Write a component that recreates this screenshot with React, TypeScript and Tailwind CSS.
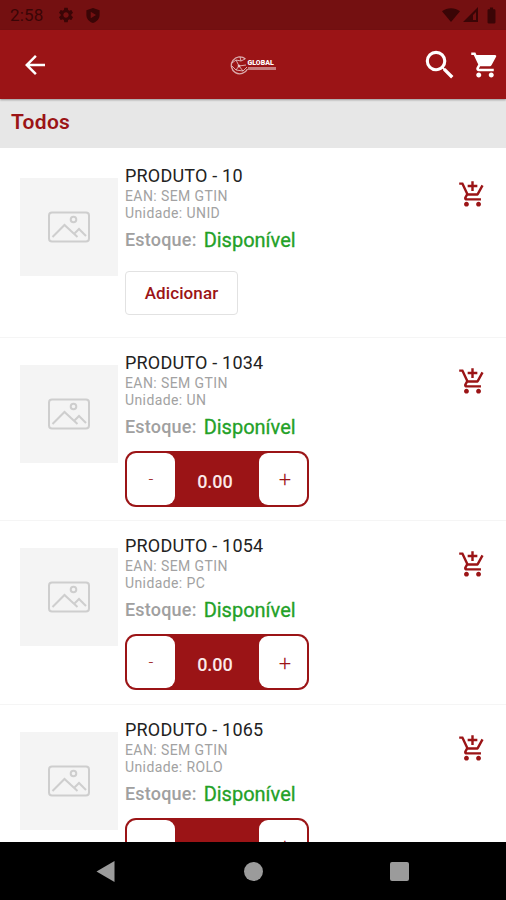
import { useState } from "react";
import {
  MdAddShoppingCart,
  MdArrowBack,
  MdBatteryFull,
  MdSearch,
  MdSettings,
  MdShoppingCart,
} from "react-icons/md";

type Product = {
  name: string;
  ean: string;
  unit: string;
  inCart: boolean;
};

const PRODUCTS: Product[] = [
  { name: "PRODUTO - 10", ean: "SEM GTIN", unit: "UNID", inCart: false },
  { name: "PRODUTO - 1034", ean: "SEM GTIN", unit: "UN", inCart: true },
  { name: "PRODUTO - 1054", ean: "SEM GTIN", unit: "PC", inCart: true },
  { name: "PRODUTO - 1065", ean: "SEM GTIN", unit: "ROLO", inCart: true },
];

function StatusBar() {
  return (
    <div className="flex h-[30px] flex-shrink-0 items-center justify-between bg-[#741011] pl-[10px] pr-[5px] text-[#3a0506]">
      <div className="flex items-center">
        <span className="w-[47px] text-[17px] leading-[30px] tracking-[0.2px]">2:58</span>
        <MdSettings className="h-[18px] w-[18px]" />
        <svg viewBox="0 0 16 18" className="ml-[10px] h-[17px] w-[16px]" fill="currentColor">
          <path fillRule="evenodd" d="M8 1l7 2.4v5.1c0 4-2.8 7-7 8.500C3.800 15.500 1 12.500 1 8.500V3.400zM5.600 5v7l5.600-3.500z" />
        </svg>
      </div>
      <div className="flex items-center">
        <svg viewBox="0 0 18 14" className="h-[14px] w-[18px]" fill="currentColor">
          <path d="M9 14L0 3.200C5-.9 13-.9 18 3.200z" />
        </svg>
        <svg viewBox="0 0 16 16" className="ml-[3px] h-[16px] w-[16px]" fill="currentColor">
          <path fillRule="evenodd" d="M15 0v15H0zM13 5l-3 3v5h3z" />
        </svg>
        <MdBatteryFull className="ml-[3px] h-[19px] w-[19px]" />
      </div>
    </div>
  );
}

function Logo() {
  return (
    <div className="flex items-center text-white/80">
      <svg viewBox="0 0 20 20" className="h-[20px] w-[20px] opacity-80" fill="none" stroke="currentColor" strokeWidth="1">
        <path d="M15.500 4A8.500 8.500 0 1 0 17.500 14" strokeWidth="1.300" />
        <path d="M2 8l4-3 5 1 4-2M6 5l3 6 7-1M9 11l-3 4-4-4M9 11l4 5 4-4M6 15l7 1M10 2l1 4" />
        <circle cx="9" cy="11" r="1" fill="currentColor" />
      </svg>
      <div className="-ml-[2px] flex flex-col">
        <span className="text-[7px] font-black leading-[7px] text-white">GLOBAL</span>
        <span className="h-[3px] w-[28px] bg-white/45" />
      </div>
    </div>
  );
}

function Header() {
  return (
    <header className="relative z-10 flex h-[69px] flex-shrink-0 items-center justify-between bg-[#9b1416] pl-[20px] pr-[6px] text-white shadow-[0_1px_2px_rgba(0,0,0,0.35)]">
      <button aria-label="Voltar" className="flex w-[75px]">
        <MdArrowBack className="h-[30px] w-[30px]" />
      </button>
      <Logo />
      <div className="flex w-[90px] flex-shrink-0 items-center justify-end gap-[11px]">
        <button aria-label="Buscar">
          <MdSearch className="h-[38px] w-[38px]" />
        </button>
        <button aria-label="Carrinho">
          <MdShoppingCart className="h-[30px] w-[30px]" />
        </button>
      </div>
    </header>
  );
}

function Thumbnail() {
  return (
    <div className="flex h-[98px] w-[98px] flex-shrink-0 items-center justify-center bg-[#f4f4f4]">
      <svg viewBox="0 0 42 32" className="h-[32px] w-[42px]" fill="none" stroke="#cecece" strokeWidth="2">
        <rect x="1" y="1.500" width="40" height="29" rx="3" />
        <circle cx="25.500" cy="8.500" r="2.800" />
        <path d="M4.500 26L16.500 14l13 12M26 23l5-5 7 7" />
      </svg>
    </div>
  );
}

function Stepper() {
  const [quantity, setQuantity] = useState(0);

  return (
    <div className="mt-[12px] flex h-[56px] w-[184px] flex-shrink-0 items-center justify-between rounded-[11px] bg-[#9b1416] p-[2px] text-[#9b1416]">
      <button
        aria-label="Diminuir"
        onClick={() => setQuantity((q) => Math.max(0, q - 1))}
        className="h-[52px] w-[48px] rounded-[9px] bg-white pt-[2px] text-[17px] font-light">
          -
      </button>
      <span className="pr-[4px] pt-[5px] text-[18px] font-medium text-[#fbe9e9]">{quantity.toFixed(2)}</span>
      <button
        aria-label="Aumentar"
        onClick={() => setQuantity((q) => q + 1)}
        className="h-[52px] w-[48px] rounded-[9px] bg-white pl-[4px] pt-[2px] text-[22px] font-light">
          +
      </button>
    </div>
  );
}

function ProductRow({ product }: { product: Product }) {
  return (
    <li className="flex h-[183.5px] flex-shrink-0 items-start border-b border-[#f5f5f5] pl-[20px] pr-[20px] pt-[27px] first:h-[189.5px] first:pt-[30px]">
      <Thumbnail />
      <div className="-mt-[13px] ml-[7px] flex flex-1 flex-col items-start">
        <h2 className="text-[18px] leading-[21px] tracking-[0.2px] text-[#222]">{product.name}</h2>
        <p className="mt-[2px] text-[14px] leading-[17px] tracking-[0.4px] text-[#a2a2a2]">EAN: {product.ean}</p>
        <p className="text-[14px] leading-[17px] tracking-[0.4px] text-[#a2a2a2]">Unidade: {product.unit}</p>
        <p className="mt-[6px] flex gap-[7px] leading-[24px]">
          <span className="text-[18px] font-medium tracking-[0.2px] text-[#a0a0a0]">Estoque:</span>
          <span className="text-[20px] text-[#23a127] [-webkit-text-stroke:0.3px_#23a127]">Disponível</span>
        </p>
        {product.inCart ? (
          <Stepper />
        ) : (
          <button className="mt-[19px] h-[44px] w-[113px] rounded-[4px] border border-[#e2e2e2] pt-[2px] text-[17px] font-medium tracking-[0.1px] text-[#9b1416]">
            Adicionar
          </button>
        )}
      </div>
      <button aria-label="Adicionar ao carrinho" className="-mr-[1px] mt-[2px] text-[#9b1416]">
        <MdAddShoppingCart className="h-[29px] w-[29px]" />
      </button>
    </li>
  );
}

function NavigationBar() {
  return (
    <nav className="grid h-[58px] flex-shrink-0 grid-cols-[180px_146px_180px] items-center bg-black text-[#9b9b9b]">
      <button aria-label="Back" className="flex pl-[96px]">
        <svg viewBox="0 0 19 21" className="h-[21px] w-[19px]" fill="currentColor">
          <path d="M18.500 0v21L.5 10.500z" />
        </svg>
      </button>
      <button aria-label="Home" className="flex justify-center">
        <span className="h-[19px] w-[19px] rounded-full bg-[#9b9b9b]" />
      </button>
      <button aria-label="Recents" className="flex pl-[64px]">
        <span className="h-[19px] w-[19px] rounded-[2px] bg-[#9b9b9b]" />
      </button>
    </nav>
  );
}

export default function App() {
  return (
    <div className="flex h-[900px] w-[506px] flex-col overflow-hidden bg-white font-['Roboto',sans-serif]">
      <StatusBar />
      <Header />
      <h1 className="h-[49px] flex-shrink-0 bg-[#e7e7e7] pl-[11px] text-[21px] font-semibold leading-[46px] tracking-[0.3px] text-[#9b1416]">
        Todos
      </h1>
      <ul className="flex min-h-0 flex-1 flex-col overflow-hidden">
        {PRODUCTS.map((product) => (
          <ProductRow key={product.name} product={product} />
        ))}
      </ul>
      <NavigationBar />
    </div>
  );
}
